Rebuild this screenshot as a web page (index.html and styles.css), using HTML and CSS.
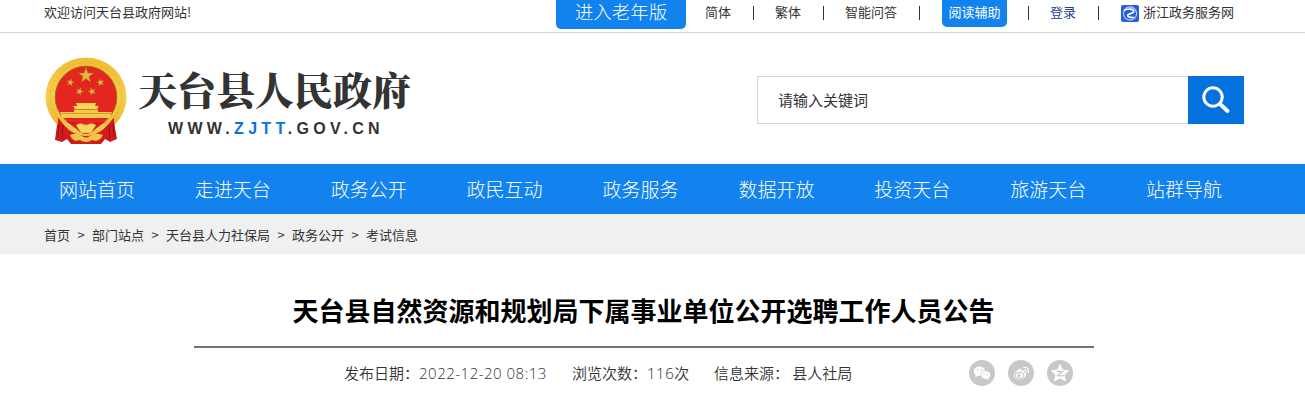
FILE: index.html
```html
<!DOCTYPE html>
<html lang="zh-CN">
<head>
    <meta charset="UTF-8">
    <title>天台县自然资源和规划局下属事业单位公开选聘工作人员公告</title>
    <link rel="stylesheet" href="styles.css">
</head>
<body>

    <div class="topbar">
        <div class="welcome">欢迎访问天台县政府网站!</div>
        <div class="top-links">
            <a class="old-btn">进入老年版</a>
            <a class="jt">简体</a>
            <i class="line"></i>
            <a>繁体</a>
            <i class="line"></i>
            <a>智能问答</a>
            <i class="line"></i>
            <a class="read-btn">阅读辅助</a>
            <i class="line"></i>
            <a class="login">登录</a>
            <i class="line"></i>
            <a class="zwfw">
                <svg width="18" height="17" viewBox="0 0 18 17">
                    <rect width="18" height="17" rx="2" fill="#2a5fdc"/>
                    <circle cx="9" cy="8.5" r="6.6" fill="none" stroke="#b9d0ff" stroke-width="1.1"/>
                    <path d="M3 5.500C7 3.200 12.500 3.800 12.800 6.300C13 8.800 7.500 8.300 6.500 10.300C6.300 11.800 10 13 13 12.300" fill="none" stroke="#fff" stroke-width="1.6"/>
                </svg>
                <span>浙江政务服务网</span>
            </a>
        </div>
    </div>

    <div class="header">
        <div class="logo">
            <svg class="emblem" width="82" height="88" viewBox="0 0 82 88">
                <defs>
                    <linearGradient id="gold" x1="0" y1="0" x2="0" y2="1">
                        <stop offset="0" stop-color="#f0bd35"/>
                        <stop offset="0.5" stop-color="#f4cf4a"/>
                        <stop offset="1" stop-color="#e9ad28"/>
                    </linearGradient>
                    <polygon id="star" points="0,-10 2.3,-3.1 9.5,-3.1 3.7,1.2 5.9,8.1 0,3.9 -5.9,8.1 -3.7,1.2 -9.5,-3.1 -2.3,-3.1"/>
                </defs>
                <path d="M13 60L10 83L17 85L22 82L26 87H56L60 82L65 85L72 82L68 60Z" fill="#cf1b1c"/>
                <ellipse cx="41" cy="40" rx="40.5" ry="39.5" fill="url(#gold)"/>
                <ellipse cx="41" cy="40" rx="35.5" ry="34.5" fill="none" stroke="#dfa229" stroke-width="2" stroke-dasharray="3 2" opacity="0.25"/>
                <circle cx="41" cy="40" r="30.8" fill="#e52620" stroke="#a9651c" stroke-width="1"/>
                <g fill="#e9b93b" stroke="#a8621a" stroke-width="0.7">
                    <use href="#star" transform="translate(41 18.500) scale(0.82)"/>
                    <use href="#star" transform="translate(25.500 25.500) rotate(12) scale(0.42)"/>
                    <use href="#star" transform="translate(55.500 25.500) rotate(-12) scale(0.42)"/>
                    <use href="#star" transform="translate(34.500 34.500) rotate(20) scale(0.42)"/>
                    <use href="#star" transform="translate(47 34.500) rotate(-20) scale(0.42)"/>
                </g>
                <path d="M31 46L32 49H28L30 52H52L54 49H50L51 46Z" fill="#f7d65a"/>
                <path d="M29 52.500H53V55H67L65 61H17L15 55H29Z" fill="#f4cc4d"/>
                <path d="M28 52.500H54M16 56.500H66" stroke="#c37b21" stroke-width="0.6"/>
                <path d="M13 61C19 65 24 65 29 65C34 65 37 69 41 69C45 69 48 65 53 65C59 65 64 65 69 61L70 80L65 83L60 76L54 82H28L22 76L17 83L12 79Z" fill="#d61b1d"/>
                <path d="M13 60Q25 66 35 75Q41 79 47 75Q57 66 69 60Q58 76 47 78Q41 80 35 78Q23 76 13 60Z" fill="#f1c64a"/>
                <path d="M31 68Q35 65 41 68Q47 65 51 68L46 76H36Z" fill="#f6d65e" stroke="#cb8929" stroke-width="0.6"/>
                <path d="M25 78Q32 75 37 79Q41 82 45 79Q50 75 58 78Q54 86 47 83Q41 87 35 83Q28 86 25 78Z" fill="#f1c548"/>
                <path d="M14 66L13 80M18 68L17 82M64 68L65 82M68 66L69 80" stroke="#8d1012" stroke-width="1"/>
            </svg>
            <div class="site">
                <div class="site-name">天台县人民政府</div>
                <div class="site-url">WWW.<span>ZJTT</span>.GOV.CN</div>
            </div>
        </div>
        <div class="search">
            <input type="text" placeholder="请输入关键词">
            <button>
                <svg width="28" height="28" viewBox="0 0 28 28">
                    <circle cx="11" cy="11" r="9.200" fill="none" stroke="#fff" stroke-width="3"/>
                    <path d="M18 18L25.500 25" stroke="#fff" stroke-width="3.800" stroke-linecap="round"/>
                </svg>
            </button>
        </div>
    </div>

    <div class="nav">
        <a>网站首页</a>
        <a>走进天台</a>
        <a>政务公开</a>
        <a>政民互动</a>
        <a>政务服务</a>
        <a>数据开放</a>
        <a>投资天台</a>
        <a>旅游天台</a>
        <a>站群导航</a>
    </div>

    <div class="crumbs">
        <a>首页</a><b>&gt;</b><a>部门站点</a><b>&gt;</b><a>天台县人力社保局</a><b>&gt;</b><a>政务公开</a><b>&gt;</b><a>考试信息</a>
    </div>

    <div class="article">
        <h1>天台县自然资源和规划局下属事业单位公开选聘工作人员公告</h1>
        <div class="info">
            <span class="date">发布日期&#65306;<em>2022-12-20 08:13</em></span>
            <span class="views">浏览次数&#65306;<em>116</em>次</span>
            <span class="source">信息来源&#65306; 县人社局</span>
            <div class="share">
                <svg width="26" height="26" viewBox="0 0 26 26">
                    <circle cx="13" cy="13" r="13" fill="#c8c8c8"/>
                    <ellipse cx="10.500" cy="11.300" rx="5.800" ry="4.700" fill="#fff"/>
                    <path d="M6.500 14.500L6.200 17.500L9.500 15.500Z" fill="#fff"/>
                    <ellipse cx="16.700" cy="15" rx="5" ry="4.200" fill="#fff" stroke="#c8c8c8" stroke-width="0.800"/>
                    <path d="M17.500 18.500L20 19.800L19.800 17.500Z" fill="#fff"/>
                    <g fill="#c8c8c8">
                        <circle cx="8.500" cy="9.800" r="0.800"/>
                        <circle cx="12.500" cy="9.800" r="0.800"/>
                        <circle cx="15" cy="14" r="0.700"/>
                        <circle cx="18.300" cy="14" r="0.700"/>
                    </g>
                </svg>
                <svg width="26" height="26" viewBox="0 0 26 26">
                    <circle cx="13" cy="13" r="13" fill="#c8c8c8"/>
                    <path d="M11 9C12.500 8 13.500 9 13 10.800C15 10 17 10.500 16 12.500C18 13 18.500 14.500 17.500 16.500C14.500 21 6 20.500 6 15.700C6 13.500 8.500 10.500 11 9Z" fill="#fff"/>
                    <ellipse cx="11.500" cy="15.500" rx="4.200" ry="3.100" fill="#fff" stroke="#c8c8c8" stroke-width="1.100"/>
                    <circle cx="11" cy="15.700" r="1.600" fill="#c8c8c8"/>
                    <path d="M15.500 7.500C19 6.500 21.500 9.500 20 12.800M15.800 10C17.500 9.600 18.500 10.800 18 12.200" fill="none" stroke="#fff" stroke-width="1.200" stroke-linecap="round"/>
                </svg>
                <svg width="26" height="26" viewBox="0 0 26 26">
                    <circle cx="13" cy="13" r="13" fill="#c8c8c8"/>
                    <path d="M13 4.500L15.600 10L21.800 10.700L17.200 14.800L18.500 21L13 17.900L7.500 21L8.800 14.800L4.200 10.700L10.400 10Z" fill="#fff" stroke="#fff" stroke-width="0.800" stroke-linejoin="round"/>
                    <path d="M9.800 11.300H15.800L10.800 15.500C13 16 15 16 17 15.300" fill="none" stroke="#c8c8c8" stroke-width="1.300"/>
                </svg>
            </div>
        </div>
    </div>

</body>
</html>
```
FILE: styles.css
```css
* {
    box-sizing: border-box;
}
body {
    margin: 0;
    background-color: #fff;
    font-family: "Noto Sans CJK SC", sans-serif;
    font-size: 13px;
    color: #333;
    overflow: hidden;
}
a {
    color: inherit;
    text-decoration: none;
}
.topbar {
    display: flex;
    justify-content: space-between;
    height: 33px;
    padding: 0 71px 0 44px;
    border-bottom: 1px solid #d6d6d6;
    line-height: 24px;
}
.top-links {
    display: flex;
    align-items: flex-start;
}
.old-btn {
    width: 130px;
    height: 29px;
    margin-right: 19px;
    background-color: #1283ee;
    border-radius: 0 0 5px 5px;
    color: #fff;
    font-size: 18.5px;
    font-weight: 300;
    line-height: 23px;
    text-align: center;
}
.line {
    width: 1px;
    height: 14px;
    margin: 6px 21px 0 22px;
    background-color: #333;
}
.read-btn {
    width: 65px;
    height: 27px;
    margin-left: 1px;
    background-color: #1283ee;
    border-radius: 0 0 5px 5px;
    color: #fff;
    text-align: center;
}
.read-btn + .line {
    margin-left: 21px;
}
.login {
    color: #1e3f94;
}
.zwfw {
    display: flex;
}
.zwfw svg {
    margin: 5px 4px 0 1px;
}
.header {
    display: flex;
    justify-content: space-between;
    height: 131px;
    padding: 24px 61px 0 45px;
}
.logo {
    display: flex;
}
.site {
    padding: 6px 0 0 11px;
}
.site-name {
    font-family: "Noto Serif CJK SC", "Noto Sans CJK SC", serif;
    font-size: 39px;
    font-weight: 900;
    line-height: 50px;
    white-space: nowrap;
}
.site-url {
    padding: 4px 0 0 30px;
    font-family: "Liberation Sans", Arial, sans-serif;
    font-size: 16px;
    font-weight: 700;
    letter-spacing: 4.3px;
    line-height: 24px;
}
.site-url span {
    color: #0a72e0;
}
.search {
    display: flex;
    width: 487px;
    height: 48px;
    margin-top: 19px;
}
.search input {
    flex: 1;
    min-width: 0;
    padding: 0 20px 2px 20px;
    border: 1px solid #d6d6d6;
    border-right: 0;
    font: 15px "Noto Sans CJK SC", sans-serif;
}
.search input::placeholder {
    color: #333;
}
.search button {
    display: flex;
    align-items: center;
    justify-content: center;
    width: 56px;
    padding: 0;
    border: 0;
    background-color: #0371de;
}
.nav {
    display: flex;
    height: 50px;
    padding-left: 29px;
    background-color: #1283ee;
    color: #fff;
    font-size: 19px;
    font-weight: 300;
    line-height: 50px;
}
.nav a {
    width: 135.9px;
    text-align: center;
}
.crumbs {
    display: flex;
    height: 40px;
    padding-left: 44px;
    background-color: #f0f0f0;
    line-height: 41px;
}
.crumbs b {
    width: 22px;
    font-weight: 400;
    text-align: center;
}
.article {
    width: 900px;
    margin-left: 194px;
}
h1 {
    height: 94px;
    margin: 0;
    padding: 36px 1px 0 0;
    border-bottom: 2px solid #737173;
    color: #000;
    font-size: 26px;
    font-weight: 700;
    line-height: 40px;
    text-align: center;
}
.info {
    display: flex;
    padding-left: 150px;
    font-size: 15px;
    font-weight: 350;
    line-height: 50px;
    white-space: nowrap;
}
.info em {
    font-family: "Open Sans", "Noto Sans", sans-serif;
    font-style: normal;
    letter-spacing: 0.5px;
}
.date {
    width: 228px;
}
.views {
    width: 142px;
}
.source {
    width: 255px;
}
.share {
    display: flex;
    gap: 13px;
    padding-top: 12px;
}
```
